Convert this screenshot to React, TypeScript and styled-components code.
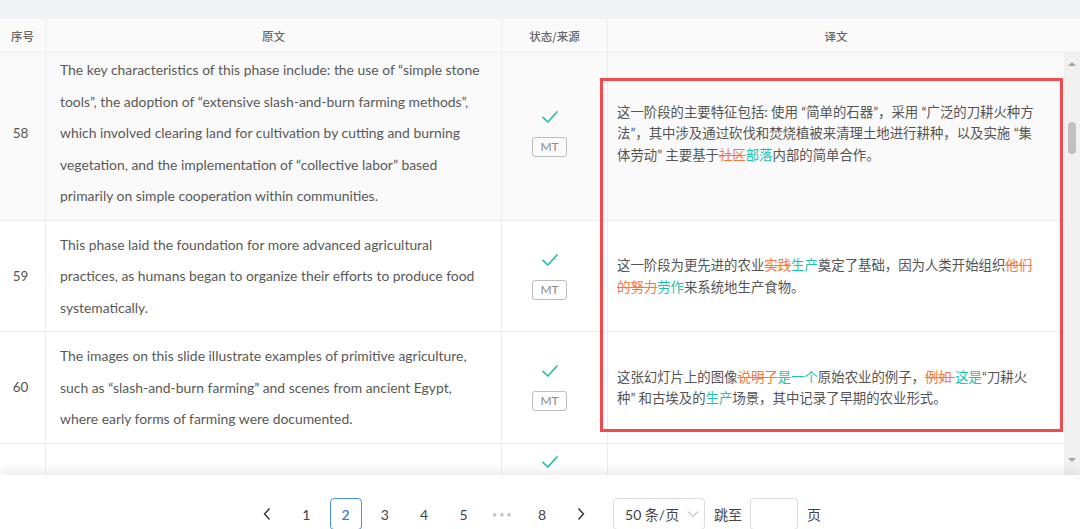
import React from "react";
import styled, { createGlobalStyle } from "styled-components";

const Global = createGlobalStyle`
  html, body { margin: 0; padding: 0; background: #fff; }
  body { font-family: "Lato", "Noto Sans CJK SC", sans-serif; }
  * { box-sizing: border-box; }
`;

const COLS = "46px 456px 106px 456px";

const Page = styled.div`
  position: relative;
  width: 1080px;
  height: 529px;
  overflow: hidden;
  background: #fff;
  display: flex;
  flex-direction: column;
`;

const TopStrip = styled.div`
  height: 19px;
  flex: none;
  background: #f0f2f5;
`;

const HeaderRow = styled.div`
  flex: none;
  display: grid;
  grid-template-columns: 46px 456px 106px 472px;
  height: 34px;
  background: #fafafa;
  border-bottom: 1px solid #ededed;
`;

const HeaderCell = styled.div<{ $last?: boolean }>`
  display: flex;
  align-items: center;
  justify-content: center;
  font-family: "Noto Sans CJK SC", sans-serif;
  font-size: 11.5px;
  font-weight: 500;
  color: #666;
  border-right: ${(p) => (p.$last ? "none" : "1px solid #ededed")};
  padding-right: ${(p) => (p.$last ? "16px" : "0")};
`;

const BodyArea = styled.div`
  flex: none;
  height: 422px;
  display: flex;
`;

const Viewport = styled.div`
  width: 1064px;
  overflow: hidden;
`;

const BodyInner = styled.div`
  margin-top: -7px;
`;

const Row = styled.div<{ $hover?: boolean; $min?: number }>`
  display: grid;
  grid-template-columns: ${COLS};
  background: ${(p) => (p.$hover ? "#fafafa" : "#fff")};
  border-bottom: 1px solid #ededed;
  min-height: ${(p) => (p.$min ? `${p.$min}px` : "0")};
`;

const Cell = styled.div<{ $last?: boolean }>`
  border-right: ${(p) => (p.$last ? "none" : "1px solid #ededed")};
  display: flex;
  flex-direction: column;
  justify-content: center;
`;

const NumCell = styled(Cell)`
  align-items: center;
  padding-right: 4px;
  font-family: "Lato", sans-serif;
  font-size: 13.5px;
  color: #555;
`;

const SourceCell = styled(Cell)`
  padding: 8px 0 8px 14px;
`;

const SourceLine = styled.div`
  font-family: "Lato", sans-serif;
  font-size: 13.9px;
  line-height: 31.5px;
  color: #595959;
  white-space: nowrap;
`;

const StatusCell = styled(Cell)<{ $top?: boolean }>`
  align-items: center;
  justify-content: ${(p) => (p.$top ? "flex-start" : "center")};
  padding: ${(p) => (p.$top ? "10px 10px 0 0" : "0 10px 0 0")};
  gap: 12px;
`;

const CheckMark = styled.svg`
  width: 18px;
  height: 16px;
  display: block;
`;

const Tag = styled.div`
  height: 20px;
  padding: 0 7px;
  border: 1px solid #bdbdbd;
  border-radius: 3px;
  font-family: "Lato", sans-serif;
  font-size: 12px;
  color: #8a8a8a;
  display: flex;
  align-items: center;
  line-height: 1;
`;

const TransCell = styled(Cell)`
  padding: 9px 0 7px 9px;
`;

const TransLine = styled.div`
  font-family: "Lato", "Noto Sans CJK SC", sans-serif;
  font-size: 13.4px;
  line-height: 21.5px;
  color: #555;
  white-space: nowrap;
`;

const Del = styled.span`
  color: #f7773d;
  text-decoration: line-through;
`;

const Ins = styled.span`
  color: #1dc2ad;
`;

const Scrollbar = styled.div`
  width: 16px;
  background: #f1f1f1;
  display: flex;
  flex-direction: column;
  align-items: center;
`;

const Arrow = styled.div<{ $down?: boolean }>`
  width: 0;
  height: 0;
  border-left: 4px solid transparent;
  border-right: 4px solid transparent;
  ${(p) =>
    p.$down
      ? "border-top: 4px solid #a3a3a3; margin-top: auto; margin-bottom: 13px;"
      : "border-bottom: 4px solid #a3a3a3; margin-top: 9px;"}
`;

const Thumb = styled.div`
  width: 8px;
  height: 32px;
  border-radius: 4px;
  background: #c1c1c1;
  margin-top: 56px;
`;

const Pager = styled.div`
  flex: 1;
  position: relative;
  background: #fff;
  box-shadow: 0 -5px 10px rgba(0, 0, 0, 0.07);
  display: flex;
  justify-content: center;
  align-items: flex-start;
  padding: 23px 8px 0 0;
  font-family: "Lato", "Noto Sans CJK SC", sans-serif;
  font-size: 14px;
  color: #444;
`;

const PageList = styled.div`
  display: flex;
  align-items: center;
  gap: 7.3px;
`;

const PageItem = styled.div<{ $active?: boolean }>`
  width: 32px;
  height: 32px;
  display: flex;
  align-items: center;
  justify-content: center;
  border-radius: 4px;
  border: 1px solid ${(p) => (p.$active ? "#4a8fe7" : "transparent")};
  color: ${(p) => (p.$active ? "#3b7ddd" : "#444")};
  font-weight: ${(p) => (p.$active ? 600 : 400)};
`;

const Dots = styled.div`
  width: 32px;
  height: 32px;
  display: flex;
  align-items: center;
  justify-content: center;
  color: #c4c4c4;
  font-size: 9px;
  letter-spacing: 2px;
`;

const SizeSelect = styled.div`
  margin-left: 15.7px;
  width: 92px;
  height: 32px;
  border: 1px solid #dcdcdc;
  border-radius: 4px;
  display: flex;
  align-items: center;
  padding: 0 0 0 11px;
  gap: 8px;
  color: #444;
`;

const JumpLabel = styled.div`
  margin-left: 9px;
  height: 32px;
  display: flex;
  align-items: center;
`;

const JumpInput = styled.div`
  margin-left: 8px;
  width: 48px;
  height: 32px;
  border: 1px solid #dcdcdc;
  border-radius: 4px;
`;

const PageSuffix = styled.div`
  margin-left: 9px;
  height: 32px;
  display: flex;
  align-items: center;
`;

const Highlight = styled.div`
  position: absolute;
  left: 600px;
  top: 78px;
  width: 463px;
  height: 354px;
  border: 3px solid #f34a4a;
  pointer-events: none;
`;

const Check = () => (
  <CheckMark viewBox="0 0 18 16">
    <path d="M2 8.3 L6.8 13 L16 3" fill="none" stroke="#22c0a6" strokeWidth="1.7" strokeLinecap="round" strokeLinejoin="round" />
  </CheckMark>
);

const Chevron = ({ dir }: { dir: "l" | "r" | "d" }) => {
  if (dir === "d")
    return (
      <svg width="12" height="8" viewBox="0 0 12 8">
        <path d="M1 1.5 L6 6.5 L11 1.5" fill="none" stroke="#c9c9c9" strokeWidth="1.1" />
      </svg>
    );
  return (
    <svg width="10" height="14" viewBox="0 0 10 14">
      <path d={dir === "l" ? "M7.5 1.5 L2.5 7 L7.5 12.5" : "M2.5 1.5 L7.5 7 L2.5 12.5"} fill="none" stroke="#333" strokeWidth="1.4" />
    </svg>
  );
};

type Seg = string | { d?: string; i?: string };

const renderSegs = (segs: Seg[]) =>
  segs.map((s, k) =>
    typeof s === "string" ? (
      <React.Fragment key={k}>{s}</React.Fragment>
    ) : s.d ? (
      <Del key={k}>{s.d}</Del>
    ) : (
      <Ins key={k}>{s.i}</Ins>
    )
  );

type RowData = { n?: number; hover?: boolean; src: string[]; tr: Seg[][]; min?: number; partial?: boolean };

const rows: RowData[] = [
  {
    n: 58,
    hover: true,
    src: [
      "The key characteristics of this phase include: the use of \u201csimple stone",
      "tools\u201d, the adoption of \u201cextensive slash-and-burn farming methods\u201d,",
      "which involved clearing land for cultivation by cutting and burning",
      "vegetation, and the implementation of \u201ccollective labor\u201d based",
      "primarily on simple cooperation within communities.",
    ],
    tr: [
      ["这一阶段的主要特征包括: 使用 \u201c简单的石器\u201d，采用 \u201c广泛的刀耕火种方"],
      ["法\u201d，其中涉及通过砍伐和焚烧植被来清理土地进行耕种，以及实施 \u201c集"],
      ["体劳动\u201d 主要基于", { d: "社区" }, { i: "部落" }, "内部的简单合作。"],
    ],
  },
  {
    n: 59,
    src: [
      "This phase laid the foundation for more advanced agricultural",
      "practices, as humans began to organize their efforts to produce food",
      "systematically.",
    ],
    tr: [
      ["这一阶段为更先进的农业", { d: "实践" }, { i: "生产" }, "奠定了基础，因为人类开始组织", { d: "他们" }],
      [{ d: "的努力" }, { i: "劳作" }, "来系统地生产食物。"],
    ],
  },
  {
    n: 60,
    src: [
      "The images on this slide illustrate examples of primitive agriculture,",
      "such as \u201cslash-and-burn farming\u201d and scenes from ancient Egypt,",
      "where early forms of farming were documented.",
    ],
    tr: [
      ["这张幻灯片上的图像", { d: "说明了" }, { i: "是一个" }, "原始农业的例子，", { d: "例如 " }, { i: "这是" }, "\u201c刀耕火"],
      ["种\u201d 和古埃及的", { i: "生产" }, "场景，其中记录了早期的农业形式。"],
    ],
  },
  { src: [], tr: [], min: 40, partial: true },
];

export default function App() {
  return (
    <>
      <Global />
      <Page>
        <TopStrip />
        <HeaderRow>
          <HeaderCell>序号</HeaderCell>
          <HeaderCell>原文</HeaderCell>
          <HeaderCell>状态/来源</HeaderCell>
          <HeaderCell $last>译文</HeaderCell>
        </HeaderRow>
        <BodyArea>
          <Viewport>
            <BodyInner>
              {rows.map((r, idx) => (
                <Row key={idx} $hover={r.hover} $min={r.min}>
                  <NumCell>{r.n}</NumCell>
                  <SourceCell>
                    {r.src.map((l, k) => (
                      <SourceLine key={k}>{l}</SourceLine>
                    ))}
                  </SourceCell>
                  <StatusCell $top={r.partial}>
                    <Check />
                    {!r.partial && <Tag>MT</Tag>}
                  </StatusCell>
                  <TransCell $last>
                    {r.tr.map((l, k) => (
                      <TransLine key={k}>{renderSegs(l)}</TransLine>
                    ))}
                  </TransCell>
                </Row>
              ))}
            </BodyInner>
          </Viewport>
          <Scrollbar>
            <Arrow />
            <Thumb />
            <Arrow $down />
          </Scrollbar>
        </BodyArea>
        <Pager>
          <PageList>
            <PageItem><Chevron dir="l" /></PageItem>
            <PageItem>1</PageItem>
            <PageItem $active>2</PageItem>
            <PageItem>3</PageItem>
            <PageItem>4</PageItem>
            <PageItem>5</PageItem>
            <Dots>•••</Dots>
            <PageItem>8</PageItem>
            <PageItem><Chevron dir="r" /></PageItem>
          </PageList>
          <SizeSelect>
            <span>50 条/页</span>
            <Chevron dir="d" />
          </SizeSelect>
          <JumpLabel>跳至</JumpLabel>
          <JumpInput />
          <PageSuffix>页</PageSuffix>
        </Pager>
        <Highlight />
      </Page>
    </>
  );
}
